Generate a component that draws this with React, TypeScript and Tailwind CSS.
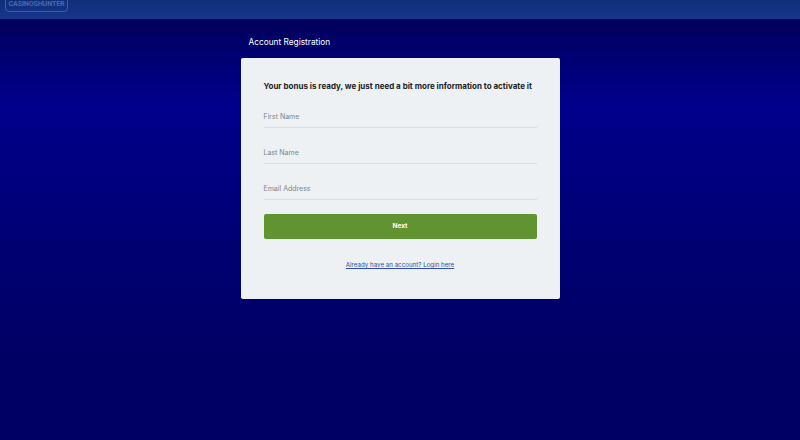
export default function App() {
  return (
    <div
      className="h-[440px] w-[800px] overflow-hidden bg-[linear-gradient(180deg,#00005c_19px,#00008c_105px,#000072_250px,#000064_360px,#000062_440px)] text-white"
      style={{ fontFamily: "Inter, sans-serif" }}
    >
      <header className="h-[19px] overflow-hidden bg-[linear-gradient(180deg,#0f2f7a,#17358c)] pl-[5px]">
        <div className="-mt-[5px] flex h-[17px] w-[63px] items-center justify-center rounded-[4px] border border-[#3f5da6]">
          <span className="text-[7.2px] leading-none font-bold tracking-tight text-[#4a67ad]" style={{ fontFamily: "Roboto, sans-serif" }}>
            CASINOSHUNTER
          </span>
        </div>
      </header>

      <main className="mx-auto w-[319px] pt-[17px]">
        <h1 className="mb-[10px] pl-[8px] text-[8.3px] leading-[12px] font-normal">Account Registration</h1>
        <div className="h-[241px] rounded-[2px] bg-[#edf1f3] px-[23px] pt-[23px]">
          <h2 className="text-[8px] leading-[11px] font-bold whitespace-nowrap text-[#1c2126]">
            Your bonus is ready, we just need a bit more information to activate it
          </h2>
          <div className="mt-[17px] flex flex-col gap-[17px]">
            <Field label="First Name" />
            <Field label="Last Name" />
            <Field label="Email Address" />
          </div>
          <button
            type="button"
            className="mt-[14px] h-[25px] w-full rounded-[2px] bg-[#629331] pt-[1px] text-[6.5px] font-bold text-white"
          >
            Next
          </button>
          <div className="mt-[18px] text-center leading-[9px]">
            <a href="#" className="text-[6.2px] text-[#2f4fa8] underline">
              Already have an account? Login here
            </a>
          </div>
        </div>
      </main>
    </div>
  );
}

function Field({ label }: { label: string }) {
  return (
    <div className="h-[19px] border-b border-[#d8dee0] text-[7px] leading-[16px] text-[#7a868c]">
      {label}
    </div>
  );
}
